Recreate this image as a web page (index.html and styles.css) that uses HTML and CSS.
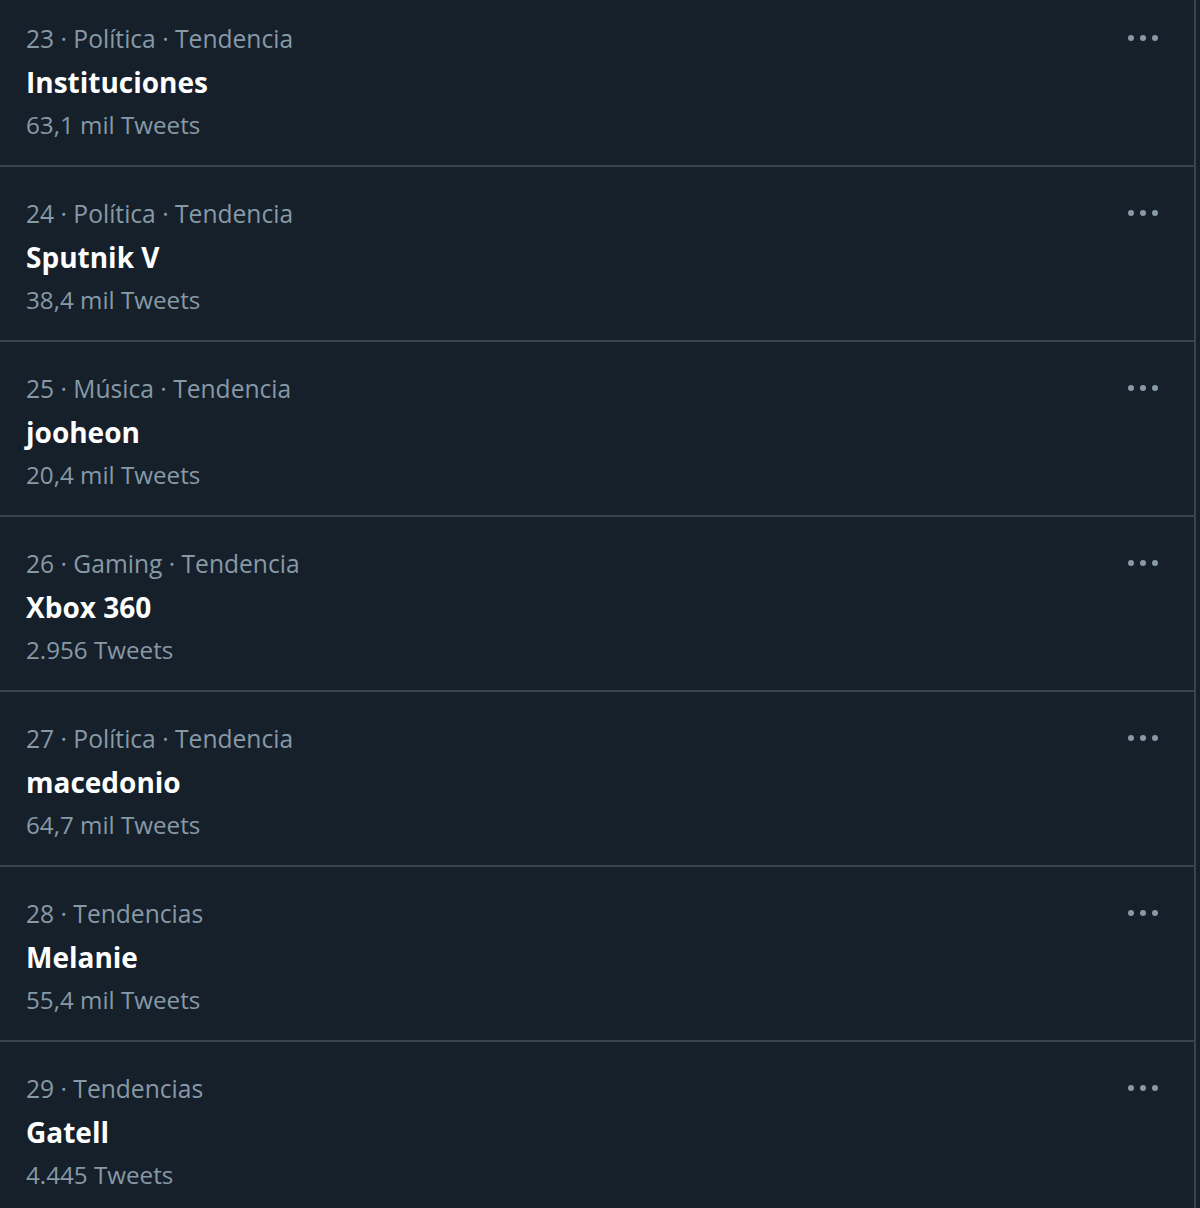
FILE: index.html
```html
<!DOCTYPE html>
<html lang="es">
<head>
  <meta charset="UTF-8" />
  <title>Tendencias</title>
  <link rel="stylesheet" href="styles.css">
</head>
<body>

  <div class="trends">
    <div class="trend">
      <div class="trend-info">
        <div class="meta">23 · Política · Tendencia</div>
        <div class="name">Instituciones</div>
        <div class="count">63,1 mil Tweets</div>
      </div>
      <svg class="more" viewBox="0 0 36 10"><circle cx="6" cy="5" r="3"/><circle cx="18" cy="5" r="3"/><circle cx="30" cy="5" r="3"/></svg>
    </div>
    <div class="trend">
      <div class="trend-info">
        <div class="meta">24 · Política · Tendencia</div>
        <div class="name">Sputnik V</div>
        <div class="count">38,4 mil Tweets</div>
      </div>
      <svg class="more" viewBox="0 0 36 10"><circle cx="6" cy="5" r="3"/><circle cx="18" cy="5" r="3"/><circle cx="30" cy="5" r="3"/></svg>
    </div>
    <div class="trend">
      <div class="trend-info">
        <div class="meta">25 · Música · Tendencia</div>
        <div class="name">jooheon</div>
        <div class="count">20,4 mil Tweets</div>
      </div>
      <svg class="more" viewBox="0 0 36 10"><circle cx="6" cy="5" r="3"/><circle cx="18" cy="5" r="3"/><circle cx="30" cy="5" r="3"/></svg>
    </div>
    <div class="trend">
      <div class="trend-info">
        <div class="meta">26 · Gaming · Tendencia</div>
        <div class="name">Xbox 360</div>
        <div class="count">2.956 Tweets</div>
      </div>
      <svg class="more" viewBox="0 0 36 10"><circle cx="6" cy="5" r="3"/><circle cx="18" cy="5" r="3"/><circle cx="30" cy="5" r="3"/></svg>
    </div>
    <div class="trend">
      <div class="trend-info">
        <div class="meta">27 · Política · Tendencia</div>
        <div class="name">macedonio</div>
        <div class="count">64,7 mil Tweets</div>
      </div>
      <svg class="more" viewBox="0 0 36 10"><circle cx="6" cy="5" r="3"/><circle cx="18" cy="5" r="3"/><circle cx="30" cy="5" r="3"/></svg>
    </div>
    <div class="trend">
      <div class="trend-info">
        <div class="meta">28 · Tendencias</div>
        <div class="name">Melanie</div>
        <div class="count">55,4 mil Tweets</div>
      </div>
      <svg class="more" viewBox="0 0 36 10"><circle cx="6" cy="5" r="3"/><circle cx="18" cy="5" r="3"/><circle cx="30" cy="5" r="3"/></svg>
    </div>
    <div class="trend">
      <div class="trend-info">
        <div class="meta">29 · Tendencias</div>
        <div class="name">Gatell</div>
        <div class="count">4.445 Tweets</div>
      </div>
      <svg class="more" viewBox="0 0 36 10"><circle cx="6" cy="5" r="3"/><circle cx="18" cy="5" r="3"/><circle cx="30" cy="5" r="3"/></svg>
    </div>
  </div>

</body>
</html>
```

FILE: styles.css
```css
body {
  background-color: #15202b;
  margin: 0;
  font-family: 'Open Sans', 'Noto Sans', sans-serif;
  overflow: hidden;
}

.trends {
  width: 1194px;
  border-right: 2px solid #38444d;
  margin-top: -8px;
}

.trend {
  display: flex;
  justify-content: space-between;
  align-items: flex-start;
  height: 173px;
  padding: 0 33px 0 26px;
  border-bottom: 2px solid #38444d;
}

.trend-info {
  padding-top: 28px;
}

.meta {
  color: #8899a6;
  font-size: 24.6px;
  line-height: 38px;
}

.name {
  color: #ffffff;
  font-size: 28px;
  font-weight: 700;
  line-height: 46px;
  margin-top: 1px;
}

.count {
  color: #8899a6;
  font-size: 24.2px;
  line-height: 40px;
}

.more {
  width: 36px;
  height: 10px;
  margin-top: 41px;
  fill: #8899a6;
}
```
